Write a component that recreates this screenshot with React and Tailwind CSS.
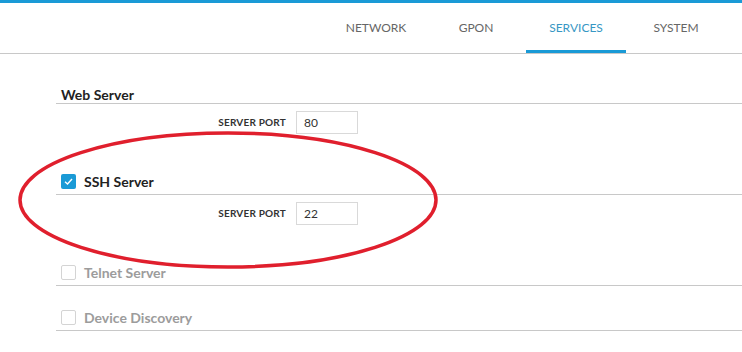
export default function App() {
  const tabs = ["NETWORK", "GPON", "SERVICES", "SYSTEM"];

  const PortRow = ({ value }) => (
    <div className="flex items-center mt-[7px]">
      <div className="w-[230px] text-right text-[10px] font-bold tracking-[0.2px] text-[#333]">SERVER PORT</div>
      <div className="ml-[10px] w-[62px] h-[23px] border border-[#d9d9d9] flex items-center pl-[7px] text-[12px] text-[#333]">
        {value}
      </div>
    </div>
  );

  const Check = ({ checked }) =>
    checked ? (
      <div className="w-[15px] h-[15px] rounded-[2px] bg-[#1a9ad6] flex items-center justify-center">
        <svg width="11" height="11" viewBox="0 0 11 11">
          <path d="M2 5.8 L4.5 8 L9 3" fill="none" stroke="#fff" strokeWidth="1.4" />
        </svg>
      </div>
    ) : (
      <div className="w-[15px] h-[15px] rounded-[2px] border border-[#d4d4d4] bg-white" />
    );

  return (
    <div className="relative w-[742px] h-[352px] bg-white overflow-hidden" style={{ fontFamily: "Lato, 'Open Sans', sans-serif" }}>
      <div className="h-[3px] bg-[#1a9ad6]" />
      <div className="h-[51px] border-b border-[#c8c8c8] flex justify-end pr-[16px]">
        {tabs.map((t) => (
          <div
            key={t}
            className={
              "w-[100px] flex items-center justify-center text-[12px] pb-[1px] " +
              (t === "SERVICES" ? "text-[#3797c4] border-b-[3px] border-[#1a9ad6] pt-[3px]" : "text-[#666]")
            }
          >
            {t}
          </div>
        ))}
      </div>

      <div className="pl-[56px] pt-[30px]">
        <div className="h-[20px] flex items-end border-b border-[#c8c8c8] pl-[5px] text-[14px] leading-[17px] font-bold text-[#222]">
          Web Server
        </div>
        <PortRow value="80" />

        <div className="mt-[34px] h-[27px] flex items-center border-b border-[#c8c8c8] pl-[5px]">
          <Check checked />
          <span className="ml-[8px] text-[14px] font-bold text-[#222]">SSH Server</span>
        </div>
        <PortRow value="22" />

        <div className="mt-[34px] h-[27px] flex items-center border-b border-[#c8c8c8] pl-[5px]">
          <Check />
          <span className="ml-[8px] text-[14px] font-bold text-[#9c9c9c]">Telnet Server</span>
        </div>

        <div className="mt-[18px] h-[27px] flex items-center border-b border-[#c8c8c8] pl-[5px]">
          <Check />
          <span className="ml-[8px] text-[14px] font-bold text-[#9c9c9c]">Device Discovery</span>
        </div>
      </div>

      <svg className="absolute left-0 top-0 pointer-events-none" width="742" height="352">
        <ellipse cx="228" cy="200" rx="208" ry="67" fill="none" stroke="#e01f2d" strokeWidth="3.5" />
      </svg>
    </div>
  );
}
